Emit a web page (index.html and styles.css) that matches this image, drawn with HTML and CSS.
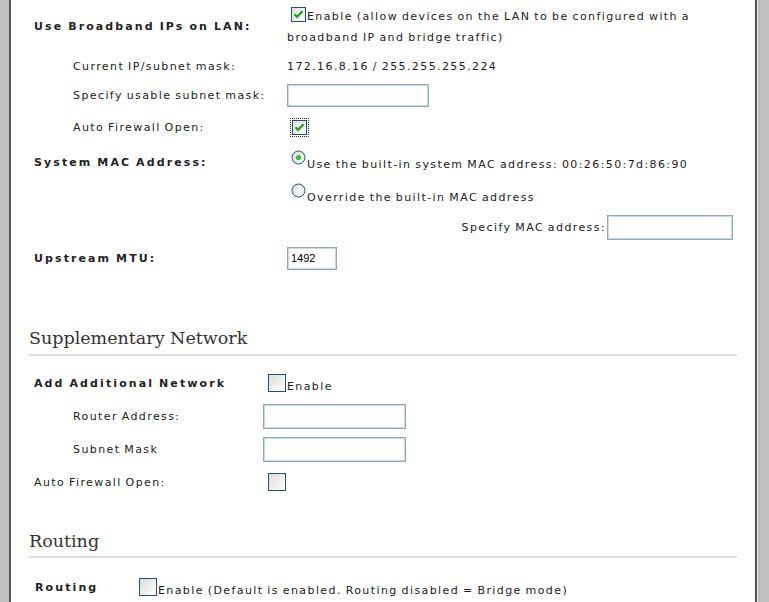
FILE: index.html
```html
<!DOCTYPE html>
<html>
<head>
<meta charset="utf-8">
<link rel="stylesheet" href="styles.css">
</head>
<body>
<div class="frame">
  <div class="page">
    <div class="sec sec-lan">
      <div class="row r1">
        <div class="label bold top">Use Broadband IPs on LAN:</div>
        <div class="val wrap">
          <svg class="cb" width="15" height="15" viewBox="0 0 15 15"><defs><linearGradient id="g1" x1="0" y1="0" x2="1" y2="1"><stop offset="0" stop-color="#dcdcd6"/><stop offset="1" stop-color="#ffffff"/></linearGradient></defs><rect x="0.5" y="0.5" width="14" height="14" fill="url(#g1)" stroke="#1c5180"/><path d="M3.5 7.2 L6 9.8 L11.5 4.2" fill="none" stroke="#21a121" stroke-width="2.2"/></svg>Enable (allow devices on the LAN to be configured with a broadband IP and bridge traffic)
        </div>
      </div>
      <div class="row r2">
        <div class="label ind">Current IP/subnet mask:</div>
        <div class="val">172.16.8.16 / 255.255.255.224</div>
      </div>
      <div class="row r3">
        <div class="label ind">Specify usable subnet mask:</div>
        <div class="val"><span class="inp w142"></span></div>
      </div>
      <div class="row r4">
        <div class="label ind">Auto Firewall Open:</div>
        <div class="val"><span class="focus"><svg class="cb2" width="15" height="15" viewBox="0 0 15 15"><rect x="0.5" y="0.5" width="14" height="14" fill="url(#g1)" stroke="#1c5180"/><path d="M3.5 7.2 L6 9.8 L11.5 4.2" fill="none" stroke="#21a121" stroke-width="2.2"/></svg></span></div>
      </div>
      <div class="row r5">
        <div class="label bold">System MAC Address:</div>
        <div class="val"><svg class="rd" width="15" height="15" viewBox="0 0 15 15"><defs><radialGradient id="rg" cx="0.6" cy="0.6" r="0.7"><stop offset="0" stop-color="#ffffff"/><stop offset="1" stop-color="#d6d6ce"/></radialGradient></defs><circle cx="7.5" cy="7.5" r="6.5" fill="url(#rg)" stroke="#2c5a8c"/><circle cx="7.5" cy="7.5" r="2.6" fill="#2fbf2f"/></svg>Use the built-in system MAC address: 00:26:50:7d:86:90</div>
      </div>
      <div class="row r6">
        <div class="label"></div>
        <div class="val"><svg class="rd" width="15" height="15" viewBox="0 0 15 15"><circle cx="7.5" cy="7.5" r="6.5" fill="url(#rg)" stroke="#2c5a8c"/></svg>Override the built-in MAC address</div>
      </div>
      <div class="row r7">
        <div class="mac">Specify MAC address:<span class="inp w126"></span></div>
      </div>
      <div class="row r8">
        <div class="label bold">Upstream MTU:</div>
        <div class="val"><span class="inp w50 num">1492</span></div>
      </div>
    </div>

    <h2 class="head h-supp">Supplementary Network</h2>

    <div class="sec sec-supp">
      <div class="row s1">
        <div class="label bold">Add Additional Network</div>
        <div class="val"><svg class="cb" width="18" height="18" viewBox="0 0 18 18"><rect x="0.5" y="0.5" width="17" height="17" fill="url(#g1)" stroke="#1c5180"/></svg>Enable</div>
      </div>
      <div class="row s2">
        <div class="label ind">Router Address:</div>
        <div class="val"><span class="inp w143"></span></div>
      </div>
      <div class="row s3">
        <div class="label ind">Subnet Mask</div>
        <div class="val"><span class="inp w143"></span></div>
      </div>
      <div class="row s4">
        <div class="label">Auto Firewall Open:</div>
        <div class="val"><svg class="cb" width="18" height="18" viewBox="0 0 18 18"><rect x="0.5" y="0.5" width="17" height="17" fill="url(#g1)" stroke="#1c5180"/></svg></div>
      </div>
    </div>

    <h2 class="head h-route">Routing</h2>

    <div class="sec sec-route">
      <div class="row t1">
        <div class="label bold">Routing</div>
        <div class="val"><svg class="cb" width="18" height="18" viewBox="0 0 18 18"><rect x="0.5" y="0.5" width="17" height="17" fill="url(#g1)" stroke="#1c5180"/></svg>Enable (Default is enabled. Routing disabled = Bridge mode)</div>
      </div>
    </div>
  </div>
</div>
</body>
</html>
```
FILE: styles.css
```css
html, body {
  margin: 0;
  padding: 0;
  height: 100%;
  overflow: hidden;
}
body {
  background: #c0c0c0;
  font-family: "DejaVu Sans", Verdana, sans-serif;
  font-size: 11px;
  letter-spacing: 1.4px;
  word-spacing: -1px;
  color: #222;
}
.frame {
  margin-left: 9px;
  width: 744px;
  height: 602px;
  background: #fff;
  border-left: 2px solid #555;
  border-right: 2px solid #555;
  box-shadow: 1px 0 0 #e8e8e8;
}
.page {
  padding-top: 4px;
}
.row {
  display: flex;
  align-items: center;
}
.label {
  box-sizing: border-box;
  padding-left: 23px;
  flex: none;
  white-space: nowrap;
}
.sec-lan .label { width: 276px; }
.sec-supp .label { width: 252px; }
.sec-route .label { width: 124px; padding-left: 24px; }
.label.ind { padding-left: 62px; }
.label.bold {
  font-weight: bold;
  letter-spacing: 2.1px;
}
.val {
  white-space: nowrap;
}
.val.wrap {
  white-space: normal;
  width: 430px;
  line-height: 21px;
  align-self: flex-start;
  padding-top: 2px;
}
.cb {
  vertical-align: -2px;
  margin: 0 1px 0 4px;
}
.rd {
  vertical-align: baseline;
  margin: -3px 1px 3px 4px;
}
.cb2 {
  display: block;
}
.focus {
  display: inline-block;
  margin-left: 3px;
  padding: 1px;
  border: 1px dotted #333;
  vertical-align: middle;
}
.inp {
  display: inline-block;
  box-sizing: border-box;
  height: 23px;
  border: 1px solid #8ea8c8;
  box-shadow: inset 0 0 0 1px #c8d6e7;
  background: #fff;
  vertical-align: middle;
}
.w142 { width: 142px; }
.w126 { width: 126px; height: 25px; }
.w143 { width: 143px; height: 25px; }
.w50 { width: 50px; }
.num {
  font-family: "Liberation Sans", Arial, sans-serif;
  font-size: 11px;
  letter-spacing: 0;
  word-spacing: 0;
  line-height: 21px;
  padding-left: 3px;
  color: #000;
}
.mac {
  box-sizing: border-box;
  width: 733px;
  text-align: right;
  padding-right: 11px;
  white-space: nowrap;
}
.mac .inp { margin-left: 1px; }
.r1 { height: 46px; align-items: flex-start; }
.r1 .label.top { padding-top: 16px; }
.r2 { height: 32px; }
.r3 { height: 26px; }
.r4 { height: 38px; }
.r5 { height: 32px; }
.r6 { height: 34px; }
.r7 { height: 30px; }
.r8 { height: 32px; }
.head {
  box-sizing: border-box;
  margin: 0 18px;
  display: flex;
  align-items: flex-end;
  font-family: "DejaVu Serif", Georgia, serif;
  font-weight: normal;
  font-size: 17.5px;
  letter-spacing: 0;
  word-spacing: 0;
  line-height: 24px;
  color: #333;
  padding-bottom: 4px;
  border-bottom: 2px solid #dcdcdc;
}
.h-supp { height: 82px; }
.sec-supp { padding-top: 11px; }
.s1 { height: 32px; }
.s1 .val, .s4 .val { padding-left: 1px; }
.s2 { height: 34px; }
.s3 { height: 33px; }
.s4 { height: 33px; }
.h-route { height: 59px; padding-bottom: 3px; }
.sec-route { padding-top: 14px; }
.t1 { height: 30px; }
```
